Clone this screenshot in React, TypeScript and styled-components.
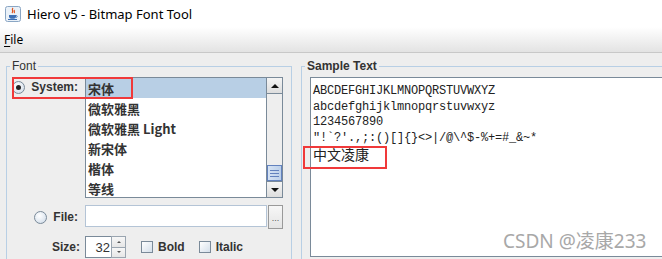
import styled, { createGlobalStyle } from "styled-components";

const GlobalStyle = createGlobalStyle`
  html, body {
    margin: 0;
    padding: 0;
  }
  body {
    width: 662px;
    height: 259px;
    overflow: hidden;
    background: #eeeeee;
    font-family: "Liberation Sans", Arial, sans-serif;
  }
`;

const Window = styled.div`
  position: relative;
  width: 662px;
  height: 259px;
  display: flex;
  flex-direction: column;
  overflow: hidden;
  background: #eeeeee;
`;

const TitleBar = styled.div`
  height: 27px;
  flex: none;
  display: flex;
  align-items: center;
  gap: 6px;
  padding-left: 5px;
  background: #ffffff;
  font-family: "Noto Sans", sans-serif;
  font-size: 13px;
  color: #000;
`;

const MenuBar = styled.div`
  height: 25px;
  flex: none;
  display: flex;
  align-items: center;
  padding-left: 4px;
  background: linear-gradient(#ffffff, #e3e3e3);
  border-bottom: 1px solid #c8c8c8;
  font-family: "Noto Sans", sans-serif;
  font-size: 12px;
  color: #000;

  u {
    text-decoration: underline;
    text-underline-offset: 2px;
  }
`;

const Body = styled.div`
  flex: 1;
  display: flex;
  gap: 9px;
  padding: 6px 0 0 6px;
  min-height: 0;
`;

const Panel = styled.fieldset<{ $width: number }>`
  margin: 0;
  padding: 0;
  flex: none;
  min-width: 0;
  width: ${(p) => p.$width}px;
  height: 280px;
  box-sizing: border-box;
  border: 1px solid #b8cfe5;
`;

const PanelTitle = styled.legend<{ $bold?: boolean }>`
  margin-left: 3px;
  padding: 0 2px;
  font-size: 12px;
  line-height: 14px;
  font-weight: ${(p) => (p.$bold ? 700 : 400)};
  color: #333333;
`;

const FontGrid = styled.div`
  display: grid;
  grid-template-columns: 78px 198px;
  row-gap: 7px;
  margin-top: 4px;
  align-items: start;
`;

const LabelCell = styled.div<{ $height: number; $pad?: number }>`
  height: ${(p) => p.$height}px;
  display: flex;
  align-items: center;
  justify-content: flex-end;
  gap: 6px;
  padding-right: ${(p) => p.$pad ?? 7}px;
  font-size: 12px;
  font-weight: 700;
  color: #333333;
`;

const Radio = styled.span<{ $checked?: boolean }>`
  width: 11px;
  height: 11px;
  flex: none;
  border-radius: 50%;
  border: 1px solid #7a8a99;
  background: radial-gradient(circle at 40% 35%, #ffffff, #dbe4ee 70%, #c4d0dd);
  display: flex;
  align-items: center;
  justify-content: center;

  &::after {
    content: "";
    display: ${(p) => (p.$checked ? "block" : "none")};
    width: 5px;
    height: 5px;
    border-radius: 50%;
    background: #222;
  }
`;

const ListBox = styled.div`
  width: 198px;
  height: 121px;
  box-sizing: border-box;
  border: 1px solid #7a8a99;
  display: flex;
  background: #ffffff;
`;

const ListItems = styled.div`
  flex: 1;
  display: flex;
  flex-direction: column;
`;

const ListItem = styled.div<{ $selected?: boolean }>`
  height: 20px;
  flex: none;
  display: flex;
  align-items: center;
  padding-left: 2px;
  background: ${(p) => (p.$selected ? "#b8cfe5" : "transparent")};
  font-family: "Noto Sans CJK SC", "Liberation Sans", sans-serif;
  font-size: 13px;
  font-weight: 700;
  color: #333333;
`;

const ScrollBar = styled.div`
  width: 16px;
  flex: none;
  box-sizing: border-box;
  border-left: 1px solid #7a8a99;
  display: flex;
  flex-direction: column;
  background: #eeeeee;
`;

const ScrollButton = styled.div<{ $down?: boolean }>`
  height: 16px;
  flex: none;
  box-sizing: border-box;
  border-bottom: ${(p) => (p.$down ? "none" : "1px solid #7a8a99")};
  border-top: ${(p) => (p.$down ? "1px solid #7a8a99" : "none")};
  background: linear-gradient(#f4f4f4, #dedede);
  display: flex;
  align-items: center;
  justify-content: center;

  &::after {
    content: "";
    width: 0;
    height: 0;
    border-left: 4px solid transparent;
    border-right: 4px solid transparent;
    ${(p) =>
      p.$down ? "border-top: 4px solid #111;" : "border-bottom: 4px solid #111;"}
  }
`;

const Track = styled.div`
  flex: 1;
`;

const Thumb = styled.div`
  height: 16px;
  flex: none;
  box-sizing: border-box;
  border: 1px solid #6382be;
  background: linear-gradient(90deg, #d6e3f4, #bcd0ea);
  display: flex;
  flex-direction: column;
  justify-content: center;
  gap: 2px;
  padding: 0 2px;
`;

const GripLine = styled.span`
  height: 1px;
  background: #6382be;
`;

const ControlRow = styled.div<{ $height: number; $gap?: number }>`
  height: ${(p) => p.$height}px;
  display: flex;
  align-items: center;
  gap: ${(p) => p.$gap ?? 0}px;
`;

const TextField = styled.div`
  width: 183px;
  height: 22px;
  box-sizing: border-box;
  border: 1px solid #b4c4d6;
  background: #ffffff;
  align-self: flex-start;
`;

const BrowseButton = styled.div`
  width: 15px;
  height: 24px;
  margin-left: 1px;
  box-sizing: border-box;
  border: 1px solid #9a9a9a;
  background: linear-gradient(#f7f7f7, #e4e4e4);
  display: flex;
  align-items: flex-end;
  justify-content: center;
  padding-bottom: 5px;
  font-size: 9px;
  line-height: 9px;
  color: #555;
`;

const Spinner = styled.div`
  display: flex;
  height: 22px;
  align-self: flex-start;
`;

const SpinnerField = styled.div`
  width: 26px;
  box-sizing: border-box;
  border: 1px solid #7a8a99;
  border-right: none;
  background: #ffffff;
  display: flex;
  align-items: center;
  justify-content: flex-end;
  padding-right: 1px;
  font-size: 13px;
  color: #333;
`;

const SpinnerButtons = styled.div`
  width: 15px;
  display: flex;
  flex-direction: column;
`;

const SpinnerButton = styled.div<{ $down?: boolean }>`
  flex: 1;
  box-sizing: border-box;
  border: 1px solid #9aa5b0;
  ${(p) => (p.$down ? "border-top: none;" : "")}
  background: linear-gradient(#f7f7f7, #e6e6e6);
  display: flex;
  align-items: center;
  justify-content: center;

  &::after {
    content: "";
    border-left: 2px solid transparent;
    border-right: 2px solid transparent;
    ${(p) =>
      p.$down ? "border-top: 2px solid #555;" : "border-bottom: 2px solid #555;"}
  }
`;

const CheckOption = styled.label<{ $offset: number }>`
  display: flex;
  align-items: center;
  gap: 5px;
  margin-left: ${(p) => p.$offset}px;
  font-size: 12px;
  font-weight: 700;
  color: #333333;
`;

const CheckBox = styled.span`
  width: 12px;
  height: 12px;
  box-sizing: border-box;
  border: 1px solid #7a8a99;
  background: linear-gradient(135deg, #ffffff, #d4dfea);
`;

const SampleArea = styled.div`
  position: relative;
  margin: 4px 0 0 8px;
  height: 180px;
  box-sizing: border-box;
  border: 1px solid #7a8a99;
  border-right: none;
  background: #ffffff;
  padding: 6px 2px;
  font-family: "Liberation Mono", "Noto Sans CJK SC", monospace;
  font-size: 12px;
  letter-spacing: -0.2px;
  line-height: 15.5px;
  color: #222;
  white-space: pre;
`;

const CjkLine = styled.div`
  font-family: "Noto Sans CJK SC", sans-serif;
  font-size: 14px;
  letter-spacing: 0;
  line-height: 17px;
`;

const Annotation = styled.div<{ $x: number; $y: number; $w: number; $h: number }>`
  position: absolute;
  left: ${(p) => p.$x}px;
  top: ${(p) => p.$y}px;
  width: ${(p) => p.$w}px;
  height: ${(p) => p.$h}px;
  box-sizing: border-box;
  border: 2px solid #f0393a;
  pointer-events: none;
`;

const Watermark = styled.div`
  position: absolute;
  left: 503px;
  top: 226px;
  font-family: "Noto Sans", "Noto Sans CJK SC", sans-serif;
  font-size: 19px;
  color: #a8a8a8;
  text-shadow: 0 0 1px rgba(255, 255, 255, 0.8);
  pointer-events: none;
`;

function JavaIcon() {
  return (
    <svg width="16" height="16" viewBox="0 0 16 16">
      <rect x="0.5" y="0.5" width="15" height="15" rx="2" fill="#eaf1f8" stroke="#8aa6c4" />
      <path d="M8 2c-2 2 1 3-1 5M9.5 4c-1 1.2 0.6 1.8-0.4 3" stroke="#e0521c" strokeWidth="1.2" fill="none" />
      <path d="M4 9h7v1.5c0 1.5-1.2 2.3-3.5 2.3S4 12 4 10.5z" fill="#3f6fb4" />
      <path d="M11 9.5c1.6 0 1.6 2-0.2 2" stroke="#3f6fb4" strokeWidth="0.9" fill="none" />
      <path d="M3 13.5h9" stroke="#3f6fb4" strokeWidth="1" />
    </svg>
  );
}

const fonts = ["宋体", "微软雅黑", "微软雅黑 Light", "新宋体", "楷体", "等线"];

export default function App() {
  return (
    <Window>
      <GlobalStyle />
      <TitleBar>
        <JavaIcon />
        <span>Hiero v5 - Bitmap Font Tool</span>
      </TitleBar>
      <MenuBar>
        <span>
          <u>F</u>ile
        </span>
      </MenuBar>
      <Body>
        <Panel $width={286}>
          <PanelTitle>Font</PanelTitle>
          <FontGrid>
            <LabelCell $height={20}>
              <Radio $checked />
              System:
            </LabelCell>
            <ListBox>
              <ListItems>
                {fonts.map((f, i) => (
                  <ListItem key={f} $selected={i === 0}>
                    {f}
                  </ListItem>
                ))}
              </ListItems>
              <ScrollBar>
                <ScrollButton />
                <Track />
                <Thumb>
                  <GripLine />
                  <GripLine />
                  <GripLine />
                </Thumb>
                <ScrollButton $down />
              </ScrollBar>
            </ListBox>

            <LabelCell $height={24} $pad={7}>
              <Radio />
              File:
            </LabelCell>
            <ControlRow $height={24}>
              <TextField />
              <BrowseButton>...</BrowseButton>
            </ControlRow>

            <LabelCell $height={22} $pad={5}>
              Size:
            </LabelCell>
            <ControlRow $height={22}>
              <Spinner>
                <SpinnerField>32</SpinnerField>
                <SpinnerButtons>
                  <SpinnerButton />
                  <SpinnerButton $down />
                </SpinnerButtons>
              </Spinner>
              <CheckOption $offset={15}>
                <CheckBox />
                Bold
              </CheckOption>
              <CheckOption $offset={14}>
                <CheckBox />
                Italic
              </CheckOption>
            </ControlRow>
          </FontGrid>
        </Panel>

        <Panel $width={380}>
          <PanelTitle $bold>Sample Text</PanelTitle>
          <SampleArea>
            <div>ABCDEFGHIJKLMNOPQRSTUVWXYZ</div>
            <div>abcdefghijklmnopqrstuvwxyz</div>
            <div>1234567890</div>
            <div>{"\"!`?'.,;:()[]{}<>|/@\\^$-%+=#_&~*"}</div>
            <CjkLine>中文凌康</CjkLine>
          </SampleArea>
        </Panel>
      </Body>

      <Annotation $x={12} $y={77} $w={121} $h={22} />
      <Annotation $x={303} $y={146} $w={84} $h={23} />
      <Watermark>CSDN @凌康233</Watermark>
    </Window>
  );
}
